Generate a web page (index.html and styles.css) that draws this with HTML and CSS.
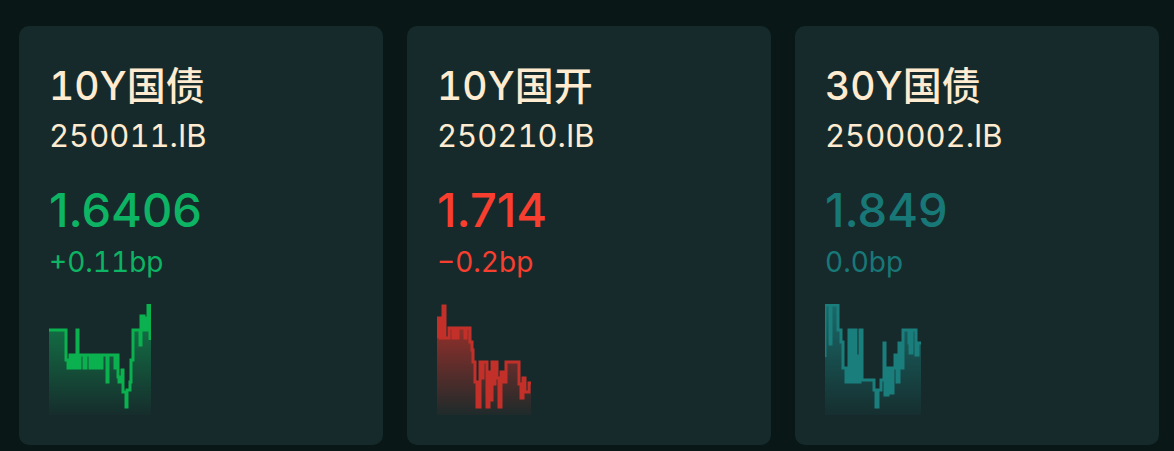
FILE: index.html
```html
<!DOCTYPE html>
<html lang="zh">
<head>
<meta charset="utf-8">
<title>Bond yields</title>
<link rel="stylesheet" href="styles.css">
</head>
<body>
<main class="board">
  <section class="card up">
    <h2 class="name">10Y国债</h2>
    <div class="code">250011.IB</div>
    <div class="yield">1.6406</div>
    <div class="change">+0.11bp</div>
    <svg class="spark" width="102" height="111" viewBox="0 0 102 111">
      <defs>
        <linearGradient id="g1" x1="0" y1="0" x2="0" y2="1">
          <stop offset="0" stop-color="#0fb25e" stop-opacity="0.62"/>
          <stop offset="1" stop-color="#0fb25e" stop-opacity="0.02"/>
        </linearGradient>
      </defs>
      <path class="area" fill="url(#g1)" d="M0 26 H17 V56 H19 V64 H21 V51 H23 V64 H26 V51 H28 V26 H29 V64 H31 V51 H35 V64 H37 V51 H41 V64 H44 V51 H46 V64 H48 V51 H51 V64 H53 V51 H58 V78 H59 V51 H66 V64 H68 V51 H69 V73 H70 V78 H73 V66 H74 V88 H77 V103 H78 V86 H81 V78 H82 V56 H84 V26 H91 V41 H92 V12 H95 V26 H98 V14 H99 V1 H101 V36 H102 V111 H0 Z"/>
      <path class="line" stroke="#0bb04f" d="M0 26 H17 V56 H19 V64 H21 V51 H23 V64 H26 V51 H28 V26 H29 V64 H31 V51 H35 V64 H37 V51 H41 V64 H44 V51 H46 V64 H48 V51 H51 V64 H53 V51 H58 V78 H59 V51 H66 V64 H68 V51 H69 V73 H70 V78 H73 V66 H74 V88 H77 V103 H78 V86 H81 V78 H82 V56 H84 V26 H91 V41 H92 V12 H95 V26 H98 V14 H99 V1 H101 V36"/>
    </svg>
  </section>

  <section class="card down">
    <h2 class="name">10Y国开</h2>
    <div class="code">250210.IB</div>
    <div class="yield">1.714</div>
    <div class="change">−0.2bp</div>
    <svg class="spark" width="94" height="111" viewBox="0 0 94 111">
      <defs>
        <linearGradient id="g2" x1="0" y1="0" x2="0" y2="1">
          <stop offset="0" stop-color="#c9322a" stop-opacity="0.85"/>
          <stop offset="1" stop-color="#c9322a" stop-opacity="0.05"/>
        </linearGradient>
      </defs>
      <path class="area" fill="url(#g2)" d="M0 34 V14 H3 V34 H6 V2 H8 V34 H12 V24 H16 V34 H17 V24 H20 V34 H21 V24 H28 V34 H29 V24 H33 V38 H35 V46 H36 V58 H38 V78 H40 V103 H43 V58 H45 V74 H46 V58 H50 V103 H52 V68 H53 V96 H55 V58 H57 V80 H58 V58 H60 V74 H62 V103 H64 V68 H66 V78 H69 V58 H82 V80 H84 V94 H86 V74 H88 V88 H92 V79 H94 V111 H0 Z"/>
      <path class="line" stroke="#c3302a" d="M0 34 V14 H3 V34 H6 V2 H8 V34 H12 V24 H16 V34 H17 V24 H20 V34 H21 V24 H28 V34 H29 V24 H33 V38 H35 V46 H36 V58 H38 V78 H40 V103 H43 V58 H45 V74 H46 V58 H50 V103 H52 V68 H53 V96 H55 V58 H57 V80 H58 V58 H60 V74 H62 V103 H64 V68 H66 V78 H69 V58 H82 V80 H84 V94 H86 V74 H88 V88 H92 V79 H94"/>
    </svg>
  </section>

  <section class="card flat">
    <h2 class="name">30Y国债</h2>
    <div class="code">2500002.IB</div>
    <div class="yield">1.849</div>
    <div class="change">0.0bp</div>
    <svg class="spark" width="96" height="111" viewBox="0 0 96 111">
      <defs>
        <linearGradient id="g3" x1="0" y1="0" x2="0" y2="1">
          <stop offset="0" stop-color="#1a7f7d" stop-opacity="0.75"/>
          <stop offset="1" stop-color="#1a7f7d" stop-opacity="0.05"/>
        </linearGradient>
      </defs>
      <path class="area" fill="url(#g3)" d="M0 53 V1 H5 V40 H6 V1 H13 V26 H16 V38 H18 V64 H21 V78 H24 V26 H26 V78 H29 V26 H31 V52 H32 V78 H35 V26 H37 V76 H49 V86 H51 V103 H53 V86 H56 V76 H59 V39 H60 V91 H63 V64 H66 V89 H68 V64 H70 V51 H72 V78 H74 V39 H76 V64 H78 V26 H84 V39 H85 V49 H87 V26 H91 V51 H93 V39 H96 V111 H0 Z"/>
      <path class="line" stroke="#1a7e7c" d="M0 53 V1 H5 V40 H6 V1 H13 V26 H16 V38 H18 V64 H21 V78 H24 V26 H26 V78 H29 V26 H31 V52 H32 V78 H35 V26 H37 V76 H49 V86 H51 V103 H53 V86 H56 V76 H59 V39 H60 V91 H63 V64 H66 V89 H68 V64 H70 V51 H72 V78 H74 V39 H76 V64 H78 V26 H84 V39 H85 V49 H87 V26 H91 V51 H93 V39 H96"/>
    </svg>
  </section>
</main>
</body>
</html>
```

FILE: styles.css
```css
html, body {
  margin: 0;
  padding: 0;
  background: #091716;
}

body {
  width: 1174px;
  height: 451px;
  overflow: hidden;
  font-family: Inter, "Noto Sans CJK SC", sans-serif;
  font-variant-numeric: tabular-nums;
}

.board {
  display: grid;
  grid-template-columns: repeat(3, 1fr);
  gap: 24px;
  padding: 26px 15px 6px 19px;
}

.card {
  background: #162a2b;
  border-radius: 10px;
  padding: 36px 30px 30px 30px;
  display: flex;
  flex-direction: column;
  align-items: flex-start;
}

.name {
  margin: 0;
  font-size: 39px;
  line-height: 48px;
  font-weight: 500;
  color: #feebd0;
}

.code {
  margin-top: 6px;
  font-size: 31px;
  line-height: 40px;
  color: #feebd0;
}

.yield {
  margin-top: 26px;
  font-size: 47px;
  line-height: 56px;
  font-weight: 500;
  font-variant-numeric: normal;
}

.change {
  margin-top: 7px;
  font-size: 28px;
  line-height: 34px;
}

.spark {
  display: block;
  margin-top: 25px;
}

.spark .line {
  fill: none;
  stroke-width: 3;
  stroke-linejoin: miter;
}

.up .yield, .up .change { color: #0db463; }
.down .yield, .down .change { color: #f83e2f; }
.flat .yield, .flat .change { color: #187877; }
```
